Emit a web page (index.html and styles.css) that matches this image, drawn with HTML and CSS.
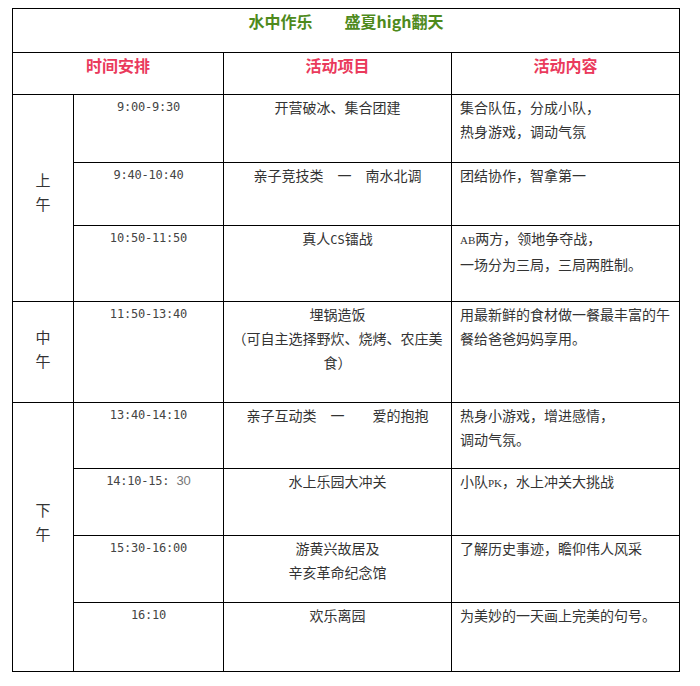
FILE: index.html
```html
<!DOCTYPE html>
<html lang="zh-CN">
<head>
<meta charset="utf-8">
<title>水中作乐 盛夏high翻天</title>
<link rel="stylesheet" href="styles.css">
</head>
<body>
<table class="schedule">
  <colgroup>
    <col class="c-period">
    <col class="c-time">
    <col class="c-item">
    <col class="c-desc">
  </colgroup>
  <tr class="r-title">
    <td colspan="4" class="title">水中作乐　　盛夏high翻天</td>
  </tr>
  <tr class="r-head">
    <td colspan="2" class="head">时间安排</td>
    <td class="head">活动项目</td>
    <td class="head">活动内容</td>
  </tr>
  <tr class="r-68">
    <td rowspan="3" class="period am">上<br>午</td>
    <td class="time">9:00-9:30</td>
    <td class="item">开营破冰、集合团建</td>
    <td class="desc">集合队伍，分成小队，<br>热身游戏，调动气氛</td>
  </tr>
  <tr class="r-63">
    <td class="time">9:40-10:40</td>
    <td class="item">亲子竞技类　一　南水北调</td>
    <td class="desc">团结协作，智拿第一</td>
  </tr>
  <tr class="r-76">
    <td class="time">10:50-11:50</td>
    <td class="item">真人<span class="latin">CS</span>镭战</td>
    <td class="desc"><span class="small">AB</span>两方，领地争夺战，<br>一场分为三局，三局两胜制。</td>
  </tr>
  <tr class="r-101">
    <td class="period noon">中<br>午</td>
    <td class="time">11:50-13:40</td>
    <td class="item">埋锅造饭<br>（可自主选择野炊、烧烤、农庄美食）</td>
    <td class="desc">用最新鲜的食材做一餐最丰富的午<br>餐给爸爸妈妈享用。</td>
  </tr>
  <tr class="r-66">
    <td rowspan="4" class="period pm">下<br>午</td>
    <td class="time">13:40-14:10</td>
    <td class="item">亲子互动类　一　　爱的抱抱</td>
    <td class="desc">热身小游戏，增进感情，<br>调动气氛。</td>
  </tr>
  <tr class="r-67">
    <td class="time">14:10-15: <span class="alt">30</span></td>
    <td class="item">水上乐园大冲关</td>
    <td class="desc">小队<span class="small">PK</span>，水上冲关大挑战</td>
  </tr>
  <tr class="r-67">
    <td class="time">15:30-16:00</td>
    <td class="item">游黄兴故居及<br>辛亥革命纪念馆</td>
    <td class="desc">了解历史事迹，瞻仰伟人风采</td>
  </tr>
  <tr class="r-69">
    <td class="time">16:10</td>
    <td class="item">欢乐离园</td>
    <td class="desc">为美妙的一天画上完美的句号。</td>
  </tr>
</table>
</body>
</html>
```

FILE: styles.css
```css
html, body {
  background: #ffffff;
}
body {
  margin: 8px 0 0 12px;
  font-family: "Noto Sans CJK SC", "Noto Sans", sans-serif;
  font-size: 14px;
  color: #333333;
}
.schedule {
  border-collapse: collapse;
  table-layout: fixed;
  width: 668px;
}
.c-period { width: 61px; }
.c-time { width: 150px; }
.c-item { width: 228px; }
.c-desc { width: 228px; }

.schedule td {
  border: 1px solid #000000;
  padding: 0 3px;
  vertical-align: top;
  line-height: 24px;
  text-align: center;
}
.r-title { height: 44px; }
.r-head { height: 42px; }
.r-68 { height: 68px; }
.r-63 { height: 63px; }
.r-76 { height: 76px; }
.r-101 { height: 101px; }
.r-66 { height: 66px; }
.r-67 { height: 67px; }
.r-69 { height: 69px; }

.title {
  font-size: 16px;
  font-weight: bold;
  color: #4e8a1c;
}
.title, .head {
  padding-top: 2px;
}
.head {
  font-size: 16px;
  font-weight: bold;
  color: #ea3a5c;
}
.period {
  font-size: 15px;
  color: #333333;
}
.period.am { padding-top: 73px; }
.period.noon { padding-top: 23px; }
.period.pm { padding-top: 95px; }

.time {
  font-family: "DejaVu Sans Mono", monospace;
  font-size: 12px;
  letter-spacing: -0.2px;
  color: #444444;
}
.alt {
  font-family: "Liberation Sans", sans-serif;
  font-size: 13px;
  letter-spacing: 0;
  color: #777777;
}
.schedule td.desc {
  text-align: left;
  padding-left: 8px;
}
.latin {
  font-family: "DejaVu Sans Mono", monospace;
  font-size: 12px;
}
.small {
  font-family: "Liberation Serif", serif;
  font-size: 11px;
}
```
